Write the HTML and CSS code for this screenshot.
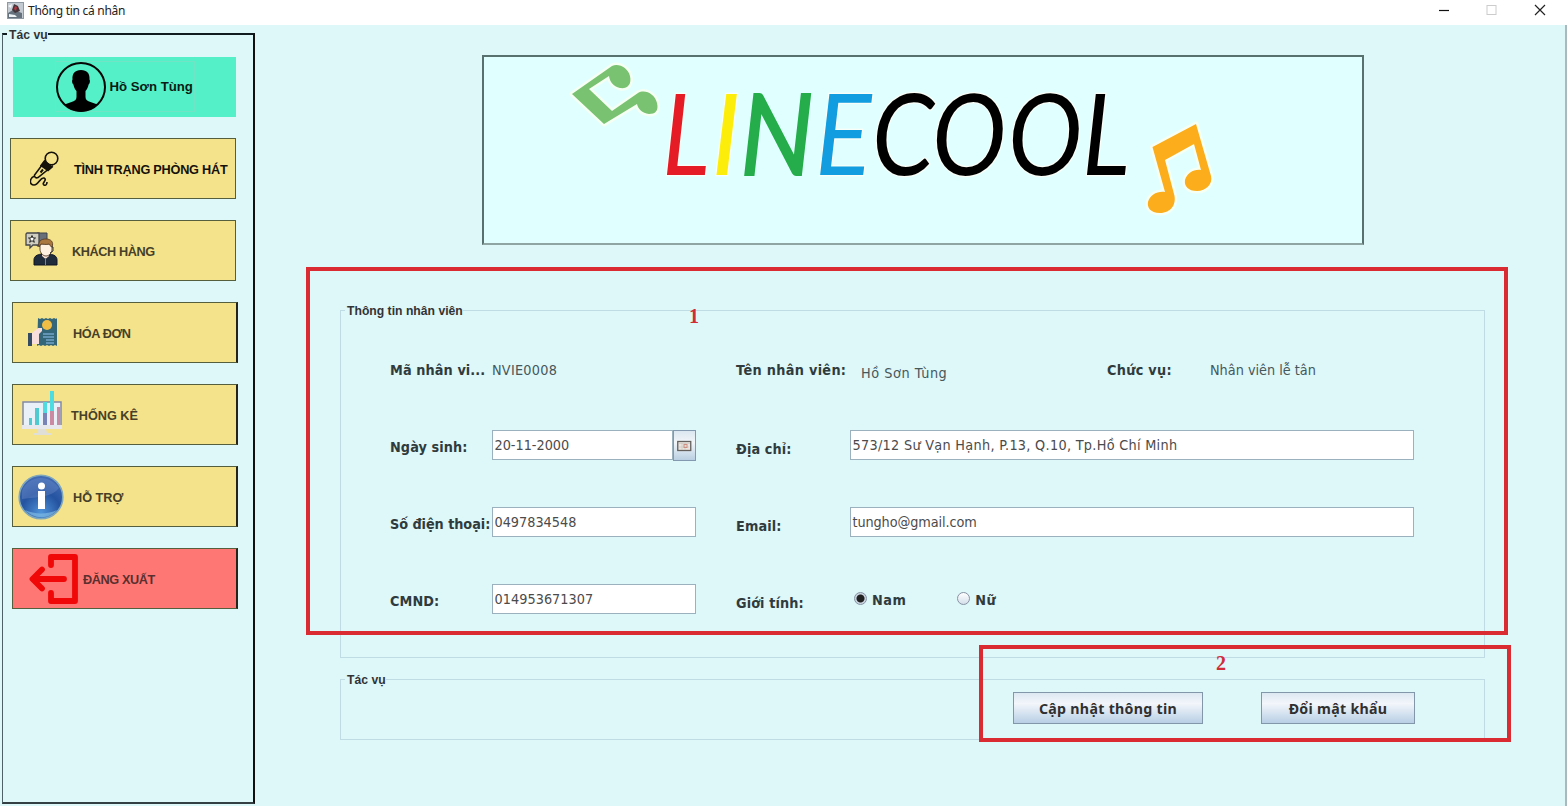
FILE: index.html
```html
<!DOCTYPE html>
<html lang="vi">
<head>
<meta charset="utf-8">
<title>Thông tin cá nhân</title>
<link rel="stylesheet" href="styles.css">
</head>
<body>
<div class="window">
  <header class="titlebar">
    <svg class="app-icon" width="17" height="17" viewBox="0 0 17 17"><rect x=".5" y=".5" width="16" height="16" fill="#c3cad2" stroke="#8f99a4"/><path d="M1 11l5-3 9 3v5H1z" fill="#65717d"/><path d="M7 2l4 2 2 5-5 2-3-3z" fill="#43353a"/><path d="M8 4l2 1-1 4-2-2z" fill="#b8333d"/><path d="M2 12l6 1 2 2H2z" fill="#eef3f5"/><path d="M1 4l4-2-1 4z" fill="#f5f7f8"/></svg>
    <span class="title">Thông tin cá nhân</span>
    <svg class="controls" width="112" height="16" viewBox="0 0 112 16" fill="none"><path d="M2 8.500h10" stroke="#111" stroke-width="1.200"/><rect x="50" y="3.500" width="9" height="9" stroke="#ccc"/><path d="M98 3l10 10M108 3l-10 10" stroke="#222" stroke-width="1.200"/></svg>
  </header>
  <div class="body">
    <fieldset class="sidebar">
      <legend>Tác vụ</legend>
      <nav class="menu">
        <div class="item user"><span class="user-box"><svg width="50" height="50" viewBox="0 0 50 50"><circle cx="25" cy="25" r="24" fill="none" stroke="#050505" stroke-width="2"/><path d="M25 8c6 0 9 3.500 8.500 9.500.8 1 .5 4-.9 5-.6 3-1.600 5-3.100 6.500V35c0 3 2 4 5 5l7 2.500C37 47.500 31 49.500 25 49.500S13 47.500 8.500 42.500l7-2.500c3-1 5-2 5-5v-6c-1.500-1.500-2.500-3.500-3.100-6.500-1.400-1-1.700-4-.9-5C16 11.500 19 8 25 8z" fill="#000"/></svg>Hồ Sơn Tùng</span></div>
        <div class="item room"><svg width="30" height="36" viewBox="0 0 30 36" fill="none" stroke="#15120a" stroke-width="1.600"><circle cx="21.500" cy="7.500" r="6.300"/><path d="M15.500 9.500L4.500 24c-.5 2 1.500 3.500 3.500 2.500L23 14.500"/><path d="M14.500 10l7.500 6-4 3.500-7-5z" fill="#15120a"/><path d="M10.500 21.500l2.500-3" stroke-width="2"/><path d="M5 25c-6 2-6 9-1 9s6-8 10-7c4 2-3 5 0 7 2 1 3-1 3-3"/></svg><span>TÌNH TRẠNG PHÒNG HÁT</span></div>
        <div class="item customer"><svg width="34" height="34" viewBox="0 0 34 34"><path d="M12 1h10v13H12z" fill="#686f78" stroke="#3f444a"/><path d="M2 1h12v12H8l-3 3v-3H1V2z" fill="#cfcdbf" stroke="#45474b" stroke-width="1.300"/><path d="M7 3.500l1 2.500h2.500l-2 1.700.8 2.600L7 8.700l-2.300 1.600.8-2.600-2-1.700H6z" fill="#fff" stroke="#222"/><path d="M9 33v-5c0-4 3-5 7-6h9c4 1 7 2 7 6v5z" fill="#202b3c" stroke="#111722"/><path d="M17 20h7v4l-3.500 3-3.500-3z" fill="#fae3d3"/><path d="M15 12h12v5c0 4-3 7-6 7s-6-3-6-7z" fill="#fff0e2" stroke="#3b2a20" stroke-width=".8"/><path d="M14 15c-1-6 2-8 7-8s8 3 6 8c-2 0-2-3-3-3-3 1-6 0-8 0z" fill="#a9773f" stroke="#53371e" stroke-width=".8"/><path d="M20.500 26v7" stroke="#75869b"/><path d="M27 15h1v4l-3 2" fill="none" stroke="#333"/></svg><span>KHÁCH HÀNG</span></div>
        <div class="item bill wide"><svg width="30" height="30" viewBox="0 0 30 30"><path d="M10 1l2 1 2-1 2 1 2-1 2 1 2-1 2 1 2-1 2 1 1-1v28l-2-1-2 1-2-1-2 1-2-1-2 1-2-1-2 1-2-1-2 1z" fill="#336679"/><circle cx="19" cy="8" r="5" fill="#f0bd45"/><path d="M15 17h11M15 20h11M18 23h8M18 26h8" stroke="#73a5c9" stroke-width="1.600"/><rect x="0" y="16" width="4" height="13" fill="#344b64"/><path d="M4 16l6-5h4v3l-3 3v10H4z" fill="#f8dddd"/></svg><span>HÓA ĐƠN</span></div>
        <div class="item stats wide"><svg width="40" height="46" viewBox="0 0 40 46"><path d="M1 12h38v24H1z" fill="#e9f0f7" stroke="#8189a8" stroke-width="1.500"/><path d="M0 35h40v4H0z" fill="#e7e8ed"/><path d="M16 39h8l1 4h4v2H12v-2h3z" fill="#e0dfd7"/><path d="M7 28h3v7H7zM13 18h4v17h-4z" fill="#4ecbd1"/><path d="M21 12h4v23h-4zM28 1h4v34h-4z" fill="#4fdce0"/><path d="M21 23h4v12h-4z" fill="#7a83b6"/><path d="M28 21h4v14h-4zM35 17h3v18h-3z" fill="#c98aa2"/></svg><span>THỐNG KÊ</span></div>
        <div class="item help wide"><svg width="46" height="46" viewBox="0 0 46 46"><defs><radialGradient id="ball" cx=".5" cy=".85" r=".9"><stop offset="0" stop-color="#4f93d8"/><stop offset=".5" stop-color="#2553a0"/><stop offset="1" stop-color="#4870b8"/></radialGradient></defs><circle cx="23" cy="23" r="21.800" fill="url(#ball)" stroke="#7fa7bb" stroke-width="1.600"/><path d="M4 17C9 3 29-2 41 14c-7 9-20 9-37 11z" fill="#7895cf" opacity=".35"/><path d="M7 36c8 9 24 10 32 0-8 4-22 5-32 0z" fill="#8bc5ea" opacity=".6"/><circle cx="23.500" cy="12" r="3.500" fill="#fff"/><path d="M20 17h7v18h-7z" fill="#fff"/></svg><span>HỖ TRỢ</span></div>
        <div class="item logout wide"><svg width="50" height="52" viewBox="0 0 50 52" fill="none" stroke="#f00808" stroke-width="5.800" stroke-linecap="round" stroke-linejoin="round"><path d="M22 12V4h24v44H22v-8"/><path d="M35 26H4M13 16.500L3.500 26l9.500 9.500"/></svg><span>ĐĂNG XUẤT</span></div>
      </nav>
    </fieldset>
    <main class="main">
      <div class="banner">
        <svg width="878" height="186" viewBox="484 57 878 186">
          <g stroke="#f6fff4" stroke-width="5" stroke-linejoin="round" paint-order="stroke">
            <path fill="#78c272" d="M572 94L612 66C619 63 628 68 630 76C632 85 627 89 620 88C613 86 610 82 609 76L589 89L612 111L638 93C645 89 655 94 657 103C659 111 655 114 649 114C642 113 638 109 637 104L604 124Z"/>
            <path fill="#fbad1c" d="M1152.500 147L1196 124L1211 176C1213 184 1206 191 1197 191C1188 191 1184 186 1185 180C1187 173 1194 169 1201 170L1194 144L1165 160L1174 194C1177 204 1171 213 1160 213C1150 213 1147 207 1148 202C1150 195 1157 191 1165 192Z"/>
          </g>
          <g class="wordmark">
            <text transform="translate(662 175) scale(.9 1)" fill="#e51c25">L</text>
            <text x="711" y="175" fill="#fcee0a">I</text>
            <text class="heavy" transform="translate(740 175) scale(.93 1)" fill="#24ad4a">N</text>
            <text transform="translate(815 175) scale(.94 1)" fill="#119ddf">E</text>
            <text transform="translate(872 175) scale(.89 1)">C</text>
            <text transform="translate(932 175) scale(.89 1)">O</text>
            <text transform="translate(1008 175) scale(.89 1)">O</text>
            <text transform="translate(1082 175) scale(.9 1)">L</text>
          </g>
        </svg>
      </div>
      <fieldset class="panel info">
        <legend>Thông tin nhân viên</legend>
        <div class="row first">
          <b class="label code">Mã nhân vi...</b><span class="value">NVIE0008</span>
          <b class="label">Tên nhân viên:</b><span class="value fullname">Hồ Sơn Tùng</span>
          <b class="label">Chức vụ:</b><span class="value role">Nhân viên lễ tân</span>
        </div>
        <div class="row">
          <b class="label">Ngày sinh:</b>
          <div class="date"><span class="input">20-11-2000</span><button class="picker"><svg width="15" height="12" viewBox="0 0 15 12"><rect x=".75" y="1.500" width="13" height="9" fill="#eae5df" stroke="#64605e" stroke-width="1.300"/><path d="M2 3.500h11M5 3v7M8 3v7M2 7h10" stroke="#c8c2be" stroke-width=".6"/><rect x="7" y="4.500" width="3" height="3" fill="none" stroke="#cf8f82"/></svg></button></div>
          <b class="label low">Địa chỉ:</b><span class="input address">573/12 Sư Vạn Hạnh, P.13, Q.10, Tp.Hồ Chí Minh</span>
        </div>
        <div class="row">
          <b class="label phone">Số điện thoại:</b><span class="input">0497834548</span>
          <b class="label low">Email:</b><span class="input email">tungho@gmail.com</span>
        </div>
        <div class="row">
          <b class="label">CMND:</b><span class="input card">014953671307</span>
          <b class="label low">Giới tính:</b>
          <div class="radios"><span class="radio"><i class="dot on"></i>Nam</span><span class="radio"><i class="dot"></i>Nữ</span></div>
        </div>
      </fieldset>
      <fieldset class="panel actions">
        <legend>Tác vụ</legend>
        <div class="buttons"><button class="btn update">Cập nhật thông tin</button><button class="btn password">Đổi mật khẩu</button></div>
      </fieldset>
    </main>
  </div>
  <div class="mark mark-one"><span>1</span></div>
  <div class="mark mark-two"><span>2</span></div>
</div>
</body>
</html>
```
FILE: styles.css
```css
* { box-sizing: border-box; }
body { margin: 0; background: #def7f9; overflow: hidden; }
fieldset { margin: 0; min-width: 0; }
button { margin: 0; padding: 0; }
svg { display: block; flex: none; }

.window { position: relative; display: flex; flex-direction: column; width: 1567px; height: 806px; font-family: "DejaVu Sans Condensed", "DejaVu Sans", sans-serif; font-stretch: condensed; font-size: 14.3px; color: #333; }
.titlebar { display: flex; align-items: center; height: 25px; padding: 0 18px 5px 7px; background: #fff; }
.title { margin-left: 4px; font: 12px/18px "Noto Sans", sans-serif; letter-spacing: -.27px; color: #222; padding-top: 1px; }
.controls { margin-left: auto; }
.body { flex: 1; display: flex; min-height: 0; background: #def7f9; border-right: 2px solid #a9b9bd; }

.sidebar { width: 253px; height: 778px; margin: 1px 0 0 2px; padding: 14px 0 0; border: 1px solid #4c6266; border-top: 2px solid #111c20; border-right: 2px solid #111; border-bottom: 2px solid #333f42; }
legend { font: bold 12.2px/18px "Liberation Sans", sans-serif; }
.sidebar legend { height: 16px; margin-left: 4px; padding: 0 0 0 2px; }
.menu { display: flex; flex-direction: column; gap: 21px; }
.item { display: flex; align-items: center; width: 226px; height: 61px; margin-left: 7px; border: 1px solid #555e3d; background: #f5e38c; font: bold 12.7px/16px "Liberation Sans", sans-serif; letter-spacing: -.4px; white-space: nowrap; color: #464028; }
.item > span { padding-top: 2px; }
.wide { margin-left: 9px; border-right: 2px solid #24241b; }
.user { justify-content: center; width: 223px; height: 60px; margin-top: .5px; margin-bottom: .5px; border: 0; background: #54f1c8; color: #0b1b16; letter-spacing: 0; margin-left: 10px; }
.item > .user-box { display: flex; align-items: center; gap: 4px; width: 140px; height: 51px; padding: 0; border: 1px solid #72e4c6; font-size: 13.2px; }
.room { color: #15120a; letter-spacing: -.22px; }
.room svg { margin: 0 14px 0 19px; }
.customer svg { margin: 0 13px 3px 14px; }
.bill svg { margin: 0 15px 1px 15px; }
.stats, .help { letter-spacing: 0; }
.stats svg { margin: 0 9px 3px 9px; }
.help svg { margin: 0 9px 0 5px; }
.logout { background: #ff7774; color: #59302f; }
.logout svg { margin: 0 4px 0 16px; }

.main { display: flex; flex-direction: column; padding-left: 85px; }
.banner { width: 882px; height: 190px; margin: 30px 0 57px 142px; border: 2px solid #58706e; border-bottom-color: #8fa5a3; background: #e0ffff; }
.wordmark text { font: italic 112px Lato, sans-serif; stroke: #f9fff8; stroke-width: 2.5px; paint-order: stroke; }
.wordmark .heavy { stroke: #24ad4a; stroke-width: 1.8px; }

.panel { width: 1145px; padding: 0; border: 1px solid #bfdbe4; }
.panel legend { height: 16px; margin-left: 4px; padding: 0 0 0 2px; }
.info { height: 356px; padding-top: 11px; }
.row { display: grid; grid-template-columns: 102px 204px 154px 564px; align-items: center; height: 77px; padding-left: 49px; }
.row > :nth-child(3) { margin-left: 40px; }
.first { grid-template-columns: 102px 204px 165px 206px 143px 200px; padding-top: 5px; }
.first > :nth-child(5) { margin-left: 40px; }
.label { padding-top: 4px; font-weight: bold; line-height: 20px; white-space: nowrap; color: #2f3b3d; letter-spacing: .1px; }
.first .label { padding-top: 0; letter-spacing: .3px; }
.first .code { letter-spacing: .1px; }
.phone { letter-spacing: -.05px; }
.low { padding-top: 9px; }
.value { line-height: 20px; white-space: nowrap; color: #46585b; letter-spacing: .25px; }
.role { letter-spacing: 0; }
.fullname { padding-top: 5px; letter-spacing: .55px; }
.input { display: block; height: 30px; padding-left: 1.5px; border: 1px solid #9bb1bd; background: #fff; line-height: 29px; white-space: nowrap; color: #4b4b4b; }
.address { letter-spacing: .3px; }
.card { letter-spacing: .05px; }
.email { letter-spacing: -.1px; }
.date { display: flex; margin-top: 2px; }
.date .input { flex: 1; }
.picker { display: flex; align-items: center; justify-content: center; width: 23px; height: 31px; border: 1px solid #8299b0; background: linear-gradient(#dbe7f0, #f2f6f9 40%, #b9cfe2); }
.radios { display: flex; gap: 51px; padding-left: 4px; }
.radio { display: flex; align-items: center; gap: 5px; padding-top: 3px; font-weight: bold; line-height: 20px; letter-spacing: .5px; color: #2f3b3d; }
.dot { width: 13px; height: 13px; margin-bottom: 4px; border: 1px solid #8793a3; border-radius: 50%; background: linear-gradient(#fff, #d4dfea); }
.on { background: radial-gradient(circle, #222 0 3.5px, #cbd6e2 4.5px); }

.actions { height: 69px; margin-top: 13px; padding-top: 5px; }
.buttons { display: flex; justify-content: flex-end; gap: 58px; padding-right: 69px; }
.btn { height: 32px; border: 1px solid #8397ab; background: linear-gradient(#dce8f2, #f3f6fb 35%, #b8cfe5); font: bold 14.2px/32px "Noto Sans", sans-serif; letter-spacing: .3px; white-space: nowrap; color: #303030; }
.update { width: 190px; }
.password { width: 154px; }

.mark { position: absolute; border: 4px solid #da2a32; font: bold 20px/22px "Liberation Serif", serif; color: #d22c38; }
.mark span { position: absolute; }
.mark-one { left: 306px; top: 267px; width: 1202px; height: 368px; }
.mark-one span { left: 379px; top: 34px; }
.mark-two { left: 979px; top: 645px; width: 532px; height: 97px; }
.mark-two span { left: 233px; top: 3px; }
```
